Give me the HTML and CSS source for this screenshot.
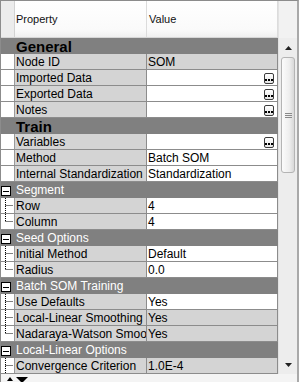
FILE: index.html
```html
<!DOCTYPE html>
<html lang="en">
<head>
    <meta charset="UTF-8">
    <title>Properties</title>
    <link rel="stylesheet" href="styles.css">
</head>
<body>
    <div class="panel">
        <div class="main">
            <div class="grid">
                <div class="head">
                    <div class="gutter"></div>
                    <div class="name">Property</div>
                    <div class="value">Value</div>
                </div>

                <div class="row section"><span>General</span></div>
                <div class="row">
                    <div class="gutter"></div>
                    <div class="name">Node ID</div>
                    <div class="value ro">SOM</div>
                </div>
                <div class="row">
                    <div class="gutter"></div>
                    <div class="name">Imported Data</div>
                    <div class="value"><span></span><span class="dots"><svg width="8" height="8"><path d="M0 5h2v2H0zM3 5h2v2H3zM6 5h2v2H6z" fill="#000"/></svg></span></div>
                </div>
                <div class="row">
                    <div class="gutter"></div>
                    <div class="name">Exported Data</div>
                    <div class="value"><span></span><span class="dots"><svg width="8" height="8"><path d="M0 5h2v2H0zM3 5h2v2H3zM6 5h2v2H6z" fill="#000"/></svg></span></div>
                </div>
                <div class="row">
                    <div class="gutter"></div>
                    <div class="name">Notes</div>
                    <div class="value"><span></span><span class="dots"><svg width="8" height="8"><path d="M0 5h2v2H0zM3 5h2v2H3zM6 5h2v2H6z" fill="#000"/></svg></span></div>
                </div>

                <div class="row section"><span>Train</span></div>
                <div class="row">
                    <div class="gutter"></div>
                    <div class="name">Variables</div>
                    <div class="value"><span></span><span class="dots"><svg width="8" height="8"><path d="M0 5h2v2H0zM3 5h2v2H3zM6 5h2v2H6z" fill="#000"/></svg></span></div>
                </div>
                <div class="row">
                    <div class="gutter"></div>
                    <div class="name">Method</div>
                    <div class="value">Batch SOM</div>
                </div>
                <div class="row">
                    <div class="gutter"></div>
                    <div class="name">Internal Standardization</div>
                    <div class="value">Standardization</div>
                </div>

                <div class="row group">
                    <div class="gutter"><svg class="toggle" width="10" height="10"><rect x="0.5" y="0.5" width="9" height="9" fill="#fff" stroke="#000"/><path d="M2 5.5H8" stroke="#000"/></svg></div>
                    <div class="label">Segment</div>
                </div>
                <div class="row">
                    <div class="gutter"><svg width="13" height="15"><path class="tree" d="M4.5 0V15M4.5 7.5H12"/></svg></div>
                    <div class="name">Row</div>
                    <div class="value">4</div>
                </div>
                <div class="row">
                    <div class="gutter"><svg width="13" height="15"><path class="tree" d="M4.5 0V7.5M4.5 7.5H12"/></svg></div>
                    <div class="name">Column</div>
                    <div class="value">4</div>
                </div>

                <div class="row group">
                    <div class="gutter"><svg class="toggle" width="10" height="10"><rect x="0.5" y="0.5" width="9" height="9" fill="#fff" stroke="#000"/><path d="M2 5.5H8" stroke="#000"/></svg></div>
                    <div class="label">Seed Options</div>
                </div>
                <div class="row">
                    <div class="gutter"><svg width="13" height="15"><path class="tree" d="M4.5 0V15M4.5 7.5H12"/></svg></div>
                    <div class="name">Initial Method</div>
                    <div class="value">Default</div>
                </div>
                <div class="row">
                    <div class="gutter"><svg width="13" height="15"><path class="tree" d="M4.5 0V7.5M4.5 7.5H12"/></svg></div>
                    <div class="name">Radius</div>
                    <div class="value">0.0</div>
                </div>

                <div class="row group">
                    <div class="gutter"><svg class="toggle" width="10" height="10"><rect x="0.5" y="0.5" width="9" height="9" fill="#fff" stroke="#000"/><path d="M2 5.5H8" stroke="#000"/></svg></div>
                    <div class="label">Batch SOM Training</div>
                </div>
                <div class="row">
                    <div class="gutter"><svg width="13" height="15"><path class="tree" d="M4.5 0V15M4.5 7.5H12"/></svg></div>
                    <div class="name">Use Defaults</div>
                    <div class="value">Yes</div>
                </div>
                <div class="row">
                    <div class="gutter"><svg width="13" height="15"><path class="tree" d="M4.5 0V15M4.5 7.5H12"/></svg></div>
                    <div class="name">Local-Linear Smoothing</div>
                    <div class="value ro">Yes</div>
                </div>
                <div class="row">
                    <div class="gutter"><svg width="13" height="15"><path class="tree" d="M4.5 0V7.5M4.5 7.5H12"/></svg></div>
                    <div class="name">Nadaraya-Watson Smoothing</div>
                    <div class="value ro">Yes</div>
                </div>

                <div class="row group">
                    <div class="gutter"><svg class="toggle" width="10" height="10"><rect x="0.5" y="0.5" width="9" height="9" fill="#fff" stroke="#000"/><path d="M2 5.5H8" stroke="#000"/></svg></div>
                    <div class="label">Local-Linear Options</div>
                </div>
                <div class="row">
                    <div class="gutter"><svg width="13" height="15"><path class="tree" d="M4.5 0V15M4.5 7.5H12"/></svg></div>
                    <div class="name">Convergence Criterion</div>
                    <div class="value ro">1.0E-4</div>
                </div>
            </div>

            <div class="scrollbar">
                <div class="sb-top"></div>
                <div class="sb-btn"><svg width="7" height="4"><path d="M3.5 0L7 4H0Z" fill="#222"/></svg></div>
                <div class="thumb">
                    <svg width="7" height="5"><path d="M0 0.5H7M0 2.5H7M0 4.5H7" stroke="#8a8a8a"/></svg>
                </div>
                <div class="track"></div>
                <div class="sb-btn"><svg width="7" height="4"><path d="M0 0H7L3.5 4Z" fill="#222"/></svg></div>
            </div>
        </div>
        <div class="footer">
            <svg width="6" height="4"><path d="M3 0L6 4H0Z" fill="#000"/></svg>
            <svg width="12" height="6"><path d="M0 0H12L6 6Z" fill="#000"/></svg>
        </div>
    </div>
</body>
</html>
```

FILE: styles.css
```css
body {
    margin: 0;
    font-family: "Liberation Sans", Arial, sans-serif;
    font-size: 12px;
    background-color: #fff;
}
.panel {
    width: 299px;
    height: 382px;
    box-sizing: border-box;
    border-top: 1px solid #8c8c8c;
    border-left: 1px solid #8c8c8c;
    border-right: 2px solid #a9a9a9;
    display: flex;
    flex-direction: column;
    overflow: hidden;
    background-color: #f2f2f2;
}
.main {
    display: flex;
}
.grid {
    width: 277px;
    background-color: #fff;
}
.head {
    display: flex;
    height: 37px;
    box-sizing: border-box;
    border-bottom: 1px solid #d6d6d6;
    font-size: 11px;
    color: #111;
}
.head .gutter {
    background-color: #ececec;
    border-right: 1px solid #d2d2d2;
}
.head .name, .head .value {
    display: flex;
    align-items: center;
    padding-left: 2px;
    background-image: linear-gradient(#fff, #fafafa 80%, #f0f0f0);
    border-right: 1px solid #dcdcdc;
}
.head .name {
    padding-left: 1px;
}
.gutter {
    width: 14px;
    flex: none;
    box-sizing: border-box;
    border-right: 1px solid #8c8c8c;
    display: flex;
    align-items: center;
}
.name {
    width: 132px;
    flex: none;
    box-sizing: border-box;
    border-right: 1px solid #8c8c8c;
    background-color: #d4d4d4;
    padding-left: 1px;
    white-space: nowrap;
    overflow: hidden;
}
.value {
    width: 131px;
    flex: none;
    box-sizing: border-box;
    border-right: 1px solid #8c8c8c;
    padding-left: 1px;
    padding-right: 3px;
    white-space: nowrap;
    overflow: hidden;
    display: flex;
    justify-content: space-between;
}
.value.ro {
    background-color: #d4d4d4;
}
.row {
    display: flex;
    height: 16px;
    box-sizing: border-box;
    border-bottom: 1px solid #8c8c8c;
    line-height: 17px;
    color: #000;
}
.row .gutter {
    border-right-color: #9a9a9a;
}
.section {
    background-color: #808080;
    font-size: 15px;
    font-weight: bold;
    line-height: 15px;
    padding-top: 1px;
    padding-left: 15px;
    border-bottom-color: #808080;
}
.group {
    background-color: #808080;
    border-bottom-color: #808080;
    color: #fff;
}
.group .gutter {
    border-right-color: #808080;
}
.group .label {
    padding-left: 1px;
}
.toggle {
    margin-top: 2px;
}
.tree {
    fill: none;
    stroke: #000;
    stroke-dasharray: 1 1;
}
.dots {
    width: 8px;
    height: 9px;
    margin-top: 3px;
    border: 1px solid #3c3c3c;
    border-radius: 2px;
    background-image: linear-gradient(#fff, #e4e4e4);
    display: flex;
}
.scrollbar {
    width: 19px;
    display: flex;
    flex-direction: column;
    background-color: #ededed;
    border-left: 1px solid #e2e2e2;
    box-sizing: border-box;
}
.sb-top {
    height: 37px;
    background-color: #f2f2f2;
}
.sb-btn {
    height: 19px;
    display: flex;
    align-items: center;
    justify-content: center;
}
.thumb {
    height: 114px;
    margin: 0 2px 0 2px;
    border: 1px solid #b4b4b4;
    border-radius: 3px;
    background-image: linear-gradient(90deg, #fbfbfb, #eeeeee 60%, #d8d8d8);
    display: flex;
    align-items: center;
    justify-content: center;
}
.track {
    flex: 1;
}
.footer {
    flex: 1;
    background-color: #f4f4f4;
    display: flex;
    align-items: flex-start;
    gap: 3px;
    padding: 3px 0 0 6px;
}
```
